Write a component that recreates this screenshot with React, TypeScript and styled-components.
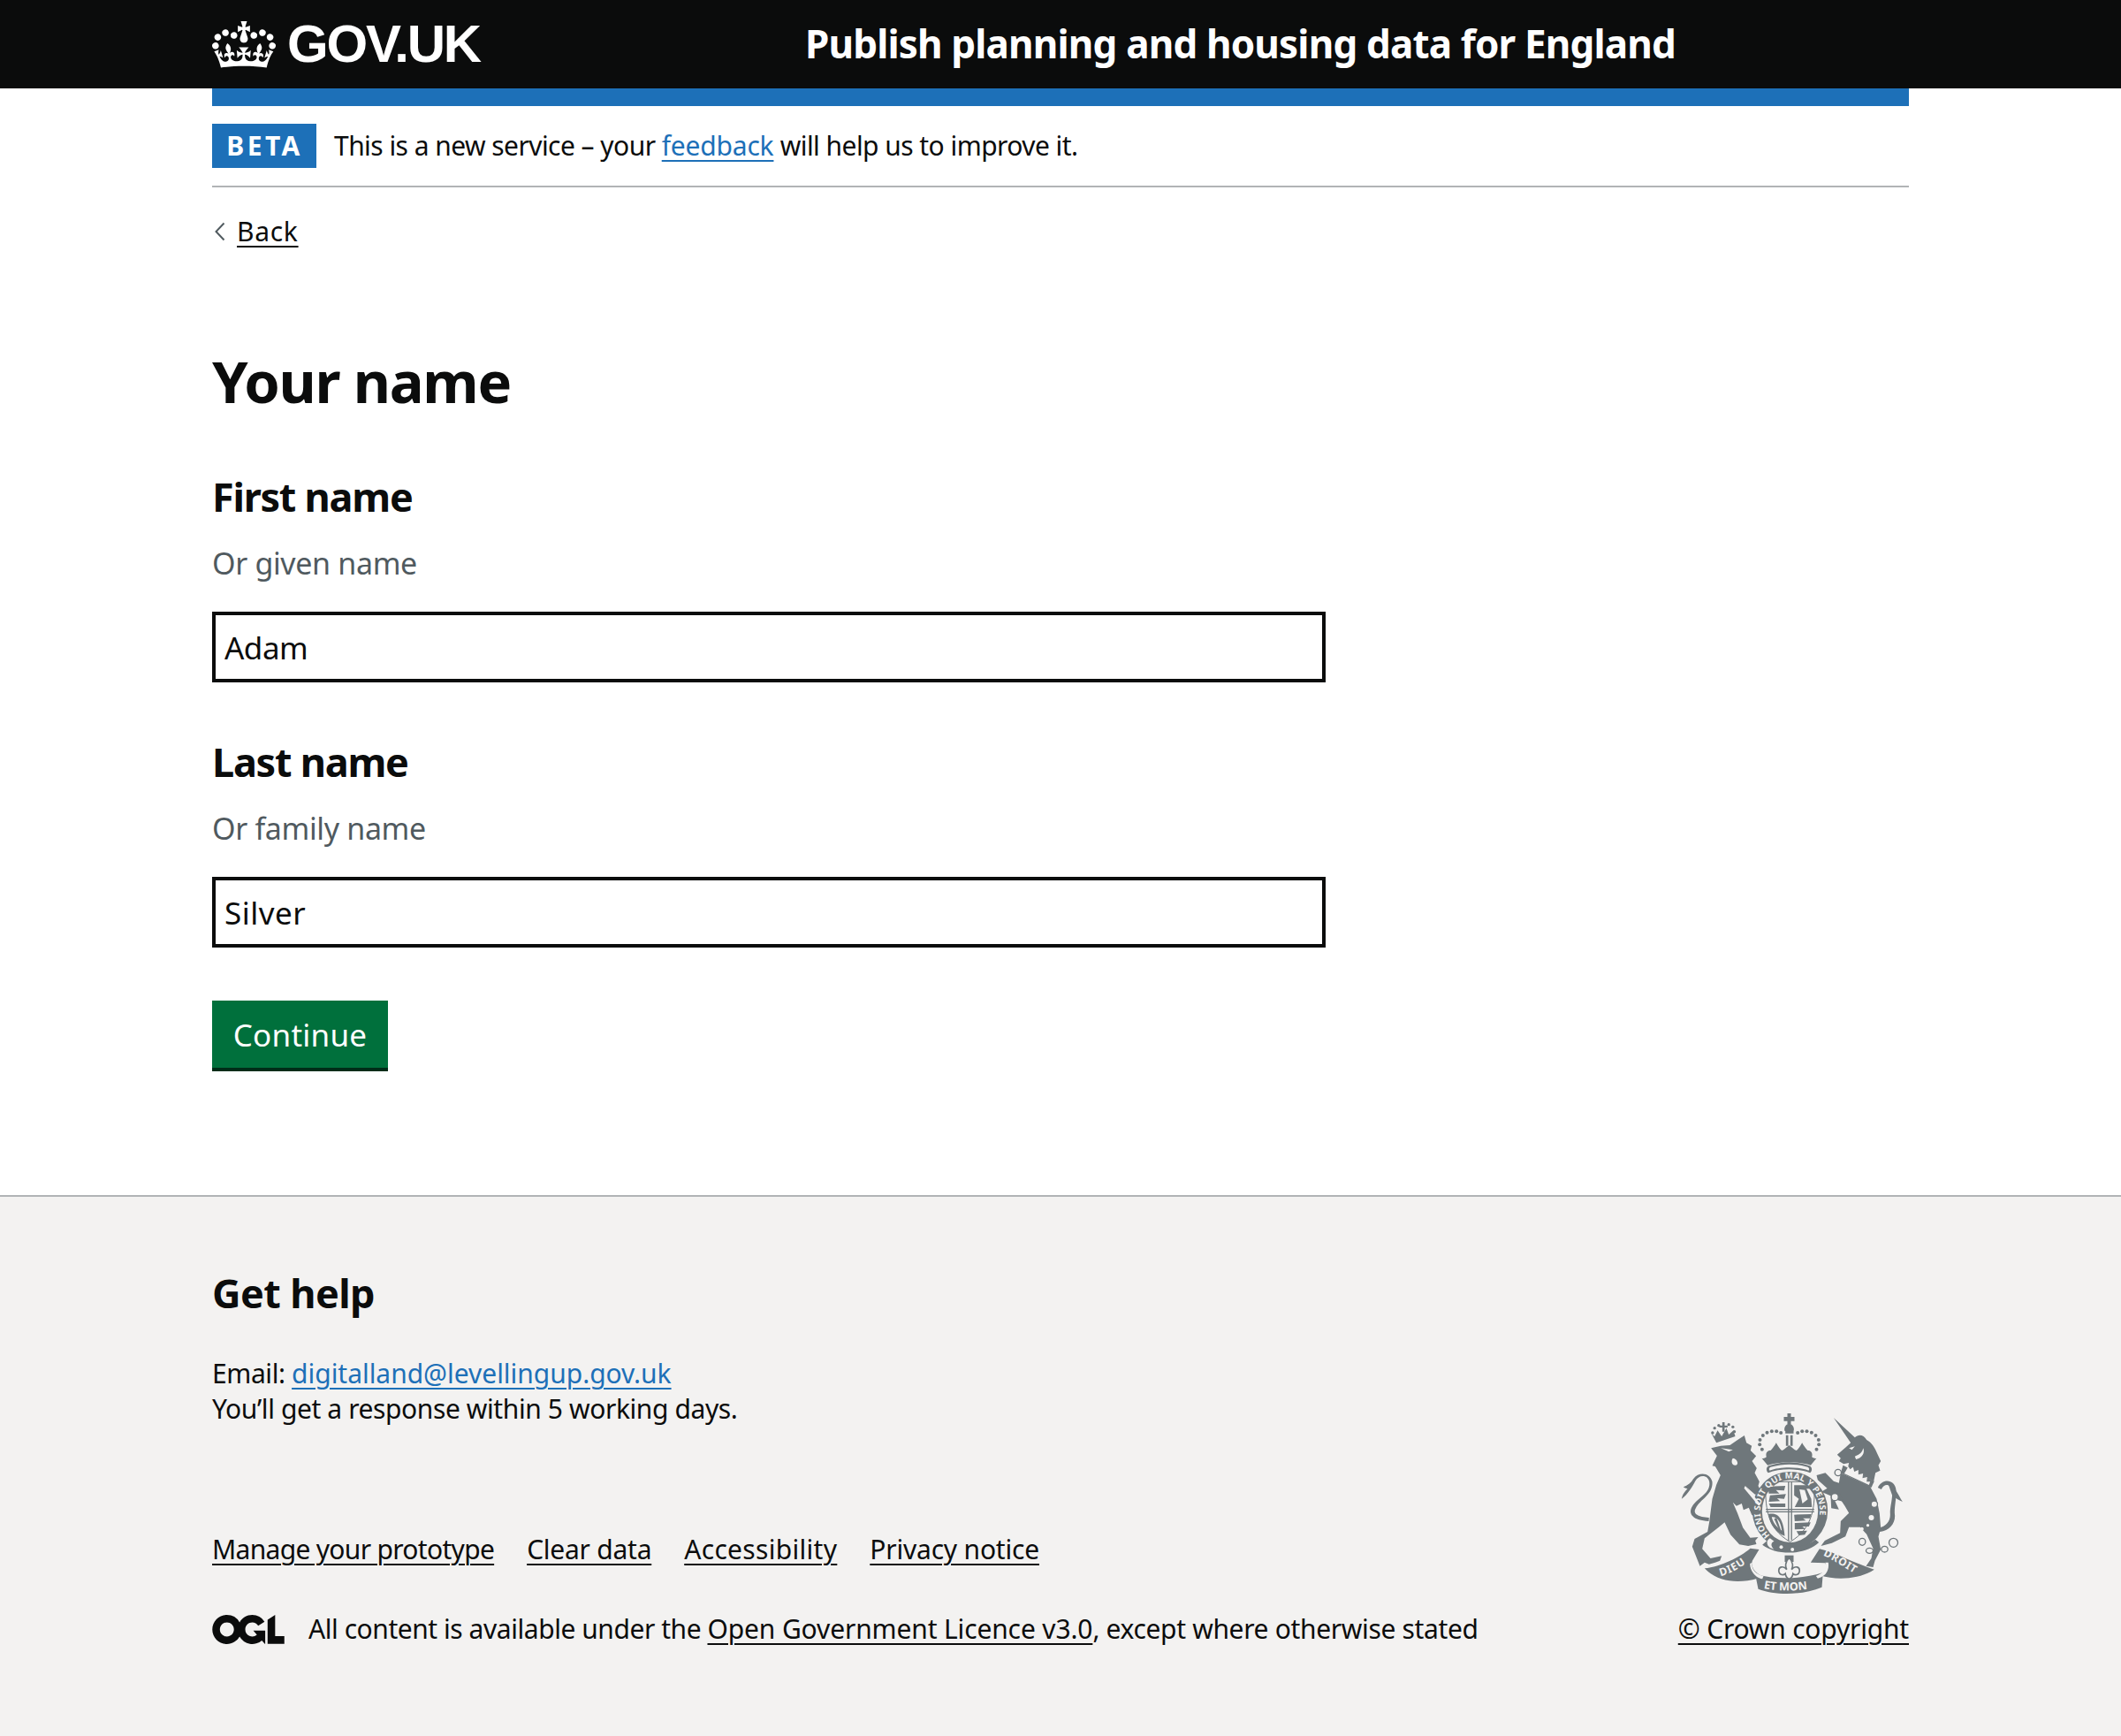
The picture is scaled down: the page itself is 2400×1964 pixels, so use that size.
import React from "react";
import styled, { createGlobalStyle } from "styled-components";

const FONT = `"Noto Sans", Arial, sans-serif`;
const INK = "#0b0c0c";
const CREST = "#6f777b";
const PAPER = "#f3f2f1";

const Global = createGlobalStyle`
  html, body { margin: 0; padding: 0; background: #fff; }
  body { font-family: ${FONT}; color: ${INK}; }
  * { box-sizing: border-box; }
`;

const Header = styled.header`
  background: ${INK};
  height: 100px;
`;
const Wrap = styled.div`
  width: 1920px;
  margin: 0 auto;
`;
const HeaderRow = styled(Wrap)`
  display: flex;
  align-items: center;
  height: 100px;
`;
const Logo = styled.a`
  display: flex;
  align-items: center;
  width: 671px;
  color: #fff;
  font-family: "Liberation Sans", Arial, sans-serif;
  font-weight: 700;
  font-size: 60px;
  letter-spacing: -2.2px;
  line-height: 60px;
  gap: 13px;
  svg { display: block; width: 72px; height: 53px; }
`;
const ServiceName = styled.span`
  padding-bottom: 2px;
  color: #fff;
  font-weight: 700;
  font-size: 44px;
  letter-spacing: -0.85px;
  line-height: 60px;
`;
const BlueBar = styled(Wrap)`
  height: 20px;
  background: #1d70b8;
`;
const Phase = styled(Wrap)`
  display: flex;
  align-items: center;
  gap: 20px;
  padding: 20px 0;
  border-bottom: 2px solid #b1b4b6;
`;
const Tag = styled.strong`
  display: block;
  width: 118px;
  height: 50px;
  padding-left: 1px;
  background: #1d70b8;
  color: #fff;
  font-size: 30px;
  font-weight: 700;
  letter-spacing: 3.4px;
  line-height: 50px;
  text-align: center;
`;
const PhaseText = styled.span`
  font-size: 30px;
  letter-spacing: -0.55px;
  line-height: 40px;
`;
const Link = styled.a<{ $track?: number }>`
  color: #1d70b8;
  text-decoration: underline;
  text-decoration-thickness: 2px;
  text-underline-offset: 5px;
  letter-spacing: ${(p) => (p.$track === undefined ? "inherit" : `${p.$track}px`)};
`;
const DarkLink = styled(Link)`
  color: ${INK};
`;
const BackRow = styled(Wrap)`
  display: flex;
  align-items: center;
  gap: 13px;
  margin-top: 30px;
  padding-left: 3px;
  font-size: 30px;
  line-height: 40px;
  svg { display: block; }
`;
const Main = styled(Wrap)`
  padding-top: 111px;
  padding-bottom: 140px;
`;
const Title = styled.h1`
  margin: 0 0 63px;
  font-size: 65px;
  font-weight: 700;
  letter-spacing: -1.3px;
  line-height: 76px;
`;
const Field = styled.div`
  margin-bottom: 60px;
`;
const Label = styled.label`
  display: block;
  font-size: 45px;
  font-weight: 700;
  letter-spacing: -1.25px;
  line-height: 60px;
`;
const Hint = styled.div`
  margin: 20px 0 30px;
  color: #505a5f;
  font-size: 34px;
  letter-spacing: -0.35px;
  line-height: 50px;
`;
const Input = styled.input<{ $track: number }>`
  display: block;
  width: 1260px;
  height: 80px;
  padding: 0 10px;
  border: 4px solid ${INK};
  border-radius: 0;
  outline: none;
  background: #fff;
  color: ${INK};
  font-family: ${FONT};
  font-size: 35px;
  letter-spacing: ${(p) => p.$track}px;
`;
const Button = styled.button`
  display: block;
  width: 199px;
  height: 80px;
  padding: 0;
  border: 0;
  border-bottom: 4px solid #002d18;
  border-radius: 0;
  background: #00703c;
  color: #fff;
  font-family: ${FONT};
  font-size: 35px;
  letter-spacing: 0.25px;
`;
const Footer = styled.footer`
  height: 612px;
  background: ${PAPER};
  border-top: 2px solid #b1b4b6;
  padding-top: 79px;
`;
const FooterRow = styled(Wrap)`
  display: flex;
  justify-content: space-between;
  align-items: flex-end;
`;
const FooterMain = styled.div`
  font-size: 30px;
  letter-spacing: -0.4px;
  line-height: 40px;
`;
const HelpTitle = styled.h2`
  margin: 0 0 41px;
  font-size: 45px;
  font-weight: 700;
  letter-spacing: -0.6px;
  line-height: 60px;
`;
const HelpLine = styled.div``;
const MetaLinks = styled.div`
  display: flex;
  gap: 37px;
  margin-top: 119px;
`;
const Licence = styled.div`
  display: flex;
  align-items: center;
  gap: 27px;
  margin-top: 50px;
  svg { display: block; width: 82px; height: 33px; color: ${INK}; }
`;
const LicenceText = styled.span`
  letter-spacing: -0.34px;
`;
const LicenceLead = styled.span`
  letter-spacing: -0.45px;
`;
const Copyright = styled.div`
  display: flex;
  flex-direction: column;
  align-items: flex-end;
  font-size: 30px;
  line-height: 40px;
  svg { display: block; width: 252px; height: 204px; margin: 0 6px 20px 0; }
`;

const Crown = () => (
  <svg viewBox="0 0 132 97" aria-hidden="true">
    <path fill="currentColor" fillRule="evenodd" d="M25 30.2c3.5 1.5 7.7-.2 9.1-3.7 1.5-3.6-.2-7.8-3.9-9.2-3.6-1.4-7.6.3-9.1 3.9-1.4 3.5.3 7.5 3.9 9zM9 39.5c3.6 1.5 7.8-.2 9.2-3.7 1.5-3.6-.2-7.8-3.9-9.1-3.6-1.5-7.6.2-9.1 3.8-1.4 3.5.3 7.5 3.8 9zM4.4 57.2c3.5 1.5 7.7-.2 9.1-3.8 1.5-3.6-.2-7.7-3.9-9.1-3.5-1.5-7.6.3-9.1 3.8-1.4 3.5.3 7.6 3.9 9.1zm38.3-21.4c3.5 1.5 7.7-.2 9.1-3.8 1.5-3.6-.2-7.7-3.9-9.1-3.6-1.5-7.6.3-9.1 3.8-1.3 3.6.4 7.7 3.9 9.1zm64.4-5.6c-3.6 1.5-7.8-.2-9.1-3.7-1.5-3.6.2-7.8 3.8-9.2 3.6-1.4 7.7.3 9.2 3.9 1.3 3.5-.4 7.5-3.9 9zm15.9 9.3c-3.6 1.5-7.7-.2-9.1-3.7-1.5-3.6.2-7.8 3.7-9.1 3.6-1.5 7.7.2 9.2 3.8 1.5 3.5-.3 7.5-3.8 9zm4.7 17.7c-3.6 1.5-7.8-.2-9.2-3.8-1.5-3.6.2-7.7 3.9-9.1 3.6-1.5 7.7.3 9.2 3.8 1.3 3.5-.4 7.6-3.9 9.1zM89.3 35.8c-3.6 1.5-7.8-.2-9.2-3.8-1.4-3.6.2-7.7 3.9-9.1 3.6-1.5 7.7.3 9.2 3.8 1.4 3.6-.3 7.7-3.9 9.1zM69.7 17.7l8.9 4.7V9.3l-8.9 2.8c-.2-.3-.5-.6-.9-.9L72.4 0H59.6l3.5 11.2c-.3.3-.6.5-.9.9l-8.8-2.8v13.1l8.8-4.7c.3.3.6.7.9.9l-5 15.4v.1c-.2.8-.4 1.6-.4 2.4 0 4.1 3.1 7.5 7 8.1h.2c.3 0 .7.1 1 .1.4 0 .7 0 1-.1h.2c4-.6 7.1-4.1 7.1-8.1 0-.8-.1-1.7-.4-2.4V34l-5.1-15.4c.4-.2.7-.6 1-.9zM66 92.8c16.9 0 32.8 1.1 47.1 3.2 4-16.9 8.9-26.7 14-33.5l-9.6-3.4c1 4.9 1.1 7.2 0 10.2-1.5-1.4-3-4.3-4.2-8.7L108.6 76c2.8-2 5-3.2 7.5-3.3-4.4 9.4-10 11.9-13.6 11.2-4.3-.8-6.3-4.6-5.6-7.9 1-4.7 5.7-5.9 8-.5 4.3-8.7-3-11.4-7.6-8.8 7.1-7.2 7.9-13.5 2.1-21.1-8 6.1-8.1 12.3-4.5 20.8-4.7-5.4-12.1-2.5-9.5 6.2 3.4-5.2 7.9-2 7.2 3.1-.6 4.3-6.4 7.8-13.5 7.2-10.3-.9-10.9-8-11.2-13.8 2.5-.5 7.1 1.8 11 7.3L80.2 60c-4.1 4.4-8 5.3-12.3 5.4 1.4-4.4 8-11.6 8-11.6H55.5s6.4 7.2 7.9 11.6c-4.2-.1-8-1-12.3-5.4l1.4 16.4c3.9-5.5 8.5-7.7 10.9-7.3-.3 5.8-.9 12.8-11.1 13.8-7.2.6-12.9-2.9-13.5-7.2-.7-5 3.8-8.3 7.1-3.1 2.7-8.7-4.6-11.6-9.4-6.2 3.7-8.5 3.6-14.7-4.6-20.8-5.8 7.6-5 13.9 2.2 21.1-4.7-2.6-11.9.1-7.7 8.8 2.3-5.5 7.1-4.2 8.1.5.7 3.3-1.3 7.1-5.7 7.9-3.5.7-9-1.8-13.5-11.2 2.5.1 4.7 1.3 7.5 3.3l-4.7-15.4c-1.2 4.4-2.7 7.2-4.3 8.7-1.1-3-.9-5.3 0-10.2l-9.5 3.4c5 6.9 9.9 16.7 14 33.5 14.8-2.1 30.8-3.2 47.7-3.2z" />
  </svg>
);

const Chevron = () => (
  <svg width="12" height="22" viewBox="0 0 12 22" aria-hidden="true">
    <path d="M10.5 1.5 1.5 11l9 9.5" fill="none" stroke="#505a5f" strokeWidth="2" />
  </svg>
);

const OglLogo = () => (
  <svg viewBox="0 0 483.2 195.7" aria-hidden="true">
    <path fill="currentColor" d="M421.5 142.8V.1l-50.7 32.3v161.1h112.4v-50.7zm-122.3-9.6A47.12 47.12 0 0 1 221 97.8c0-26 21.1-47.1 47.1-47.1 16.7 0 31.4 8.7 39.7 21.8l42.7-27.2A97.63 97.63 0 0 0 268.1 0c-36.5 0-68.3 20.1-85.1 49.7A98 98 0 0 0 97.8 0C43.9 0 0 43.9 0 97.8s43.9 97.8 97.8 97.8c36.5 0 68.3-20.1 85.1-49.7a97.76 97.76 0 0 0 149.6 25.4l19.4 22.2h3v-87.8h-80l24.3 27.5zM97.8 145c-26 0-47.1-21.1-47.1-47.1s21.1-47.1 47.1-47.1 47.2 21 47.2 47S123.8 145 97.8 145" />
  </svg>
);

const crownDots: [number, number][] = [
  [345, 182], [337, 166], [338, 150], [348, 135], [362, 125], [378, 121], [394, 121], [409, 126],
  [466, 126], [481, 121], [497, 121], [513, 125], [527, 135], [537, 150], [538, 166], [530, 182],
];
const lionCrownDots: [number, number][] = [[177, 126], [184, 110], [198, 101], [232, 98], [246, 106], [251, 122]];
const chain: [number, number, number, number][] = [
  [685, 496, 11, 12], [710, 526, 12, 9], [761, 521, 11, 10], [791, 499, 15, 15],
];
const unicornRings: [number, number, number][] = [[603, 261, 11], [592, 344, 12], [726, 368, 11]];
const unicornSpots: [number, number, number][] = [[716, 414, 9], [684, 452, 6], [704, 440, 5]];

const Crest = () => (
  <svg viewBox="70 60 755 612" aria-hidden="true">
    <defs>
      <path id="garterPath" d="M372 474 A101 111 0 1 1 508 474" />
      <path id="dieuPath" d="M204 612 C240 604 280 580 312 552" />
      <path id="monPath" d="M350 654 C390 664 480 664 526 650" />
      <path id="droitPath" d="M552 542 C590 558 635 590 672 612" />
    </defs>
    <g fill={CREST} stroke="none">
      <path d="M172 178 L205 170 L236 168 L262 150 L285 135 L292 160 L310 170 L306 186 L325 205 L311 222 L327 246 L320 262 L336 292 L332 306 L340 322 L322 336 L290 308 L318 345 L345 400 L330 418 L310 404 L300 380 L282 388 L276 366 L258 374 L246 362 L262 400 L280 448 L305 482 L332 480 L322 492 L326 504 L298 510 L268 505 L238 472 L218 430 L198 446 L150 484 L142 520 L170 552 L208 544 L202 560 L186 566 L165 572 L150 566 L134 578 L108 512 L116 486 L160 462 L166 428 L176 350 L190 302 L204 270 L186 240 L176 238 L192 204 Z" />
      <path d="M205 178 L246 184 L232 190 Z M246 212 C262 214 268 236 254 236 C240 236 240 218 246 212 Z" fill={PAPER} />
      <path d="M164 426 C112 424 92 402 108 376 C128 344 172 332 166 292 C160 266 130 268 118 290 C110 306 92 336 72 350 C76 334 82 326 92 316 C84 314 80 312 78 310 C92 304 104 296 112 282 C130 258 168 260 176 292 C180 336 134 352 120 382 C108 402 130 412 165 414 Z" />
      <path d="M190 160 L254 138 L248 118 L232 132 L224 110 L208 138 L194 118 L184 138 L174 130 Z" />
      <path d="M200 101 h10 v-11 h8 v11 h10 v7 h-10 v14 h-8 v-14 h-10 z" />
      {lionCrownDots.map(([cx, cy]) => (
        <circle key={`${cx}-${cy}`} cx={cx} cy={cy} r="5" />
      ))}
      {crownDots.map(([cx, cy]) => (
        <circle key={`${cx}-${cy}`} cx={cx} cy={cy} r="6" />
      ))}
      <path d="M431 60 h12 v12 h12 v14 h-12 v10 h-12 v-10 h-12 v-14 h12 z" />
      <path d="M437 94 C450 98 456 112 452 120 L422 120 C418 112 424 98 437 94 Z" />
      <path d="M424 120 H452 V128 H424 Z M426 134 h8 v36 h-8 z M441 134 h8 v36 h-8 z" />
      <path d="M360 208 C356 196 362 186 374 186 C380 180 388 170 393 160 C398 170 406 182 412 186 C420 184 426 176 437 168 C448 176 454 184 462 186 C468 182 476 170 481 160 C486 170 494 180 500 186 C512 186 518 196 514 208 C520 212 526 214 530 212 L510 236 C470 222 404 222 364 236 L344 212 C350 214 354 212 360 208 Z" />
      <path d="M368 238 C420 222 456 222 506 238 C516 242 516 256 508 262 C470 246 404 246 366 262 C358 256 358 242 368 238 Z" />
      <path d="M374 242 C420 230 456 230 500 242 C506 246 506 250 503 254 C470 240 404 240 371 254 C368 250 368 246 374 242 Z" fill={PAPER} />
      <ellipse cx="440" cy="390" rx="128" ry="132" />
      <ellipse cx="440" cy="392" rx="95" ry="106" fill={PAPER} />
      <path d="M358 292 H522 C526 372 520 450 440 496 C360 450 354 372 358 292 Z" fill="none" stroke={CREST} strokeWidth="3" />
      <path d="M433 292 h4 v200 h-4 z M443 292 h4 v198 h-4 z M358 384 H522 v4 H358 z M358 392 H522 v4 H358 z" />
      <path d="M366 308 L424 306 L420 322 L392 320 L404 332 L368 332 Z M372 338 L426 334 L420 350 L396 348 L406 358 L368 360 Z M368 366 H424 V378 H374 Z" />
      <path d="M454 304 L514 304 L514 316 L496 316 L512 350 L514 378 L456 378 L470 350 L454 338 Z" />
      <path d="M472 318 L490 320 L500 352 L482 366 Z" fill={PAPER} />
      <path d="M454 404 L512 402 L508 416 L484 416 L494 424 L456 426 Z M456 432 L510 430 L504 444 L482 444 L492 452 L456 454 Z M462 460 L498 458 L490 472 L470 474 Z" />
      <path d="M366 402 C398 396 416 412 422 476 C394 466 372 440 366 402 Z" />
      <path d="M378 412 C396 410 408 426 412 458 C396 448 382 432 378 412 Z" fill={PAPER} />
      <path d="M386 418 L394 414 L410 460 L403 456 Z" />
      <path d="M288 306 L340 368 L334 374 L284 314 Z" fill={PAPER} />
      <path d="M362 492 C392 518 482 524 526 488 L538 498 C490 544 392 542 346 506 Z" />
      <path d="M372 484 C360 490 358 506 372 516 L386 522 C372 508 376 498 386 494 Z" fill={PAPER} />
      <circle cx="410" cy="514" r="6" fill={PAPER} />
      <circle cx="448" cy="522" r="6" fill={PAPER} />
      <path d="M588 75 L660 142 C672 130 690 132 700 150 C716 158 728 176 734 192 L748 222 L740 236 L746 254 L730 262 L724 290 L636 246 L640 228 L622 232 L606 222 L612 212 L600 200 L628 176 L646 160 Z" />
      <path d="M640 178 L660 172 L650 184 Z M660 206 C676 200 686 192 688 178 C696 192 684 214 664 216 Z" fill={PAPER} />
      <path d="M612 262 L712 308 L734 350 L744 400 L748 450 L740 478 L748 522 L728 560 L722 582 L698 578 L716 552 L722 518 L700 470 L678 446 L640 446 L628 478 L582 500 L545 510 L558 492 L610 466 L612 426 L640 398 L626 374 L610 350 L600 330 L566 314 L534 286 L530 270 L560 262 L588 290 L606 296 Z" />
      <path d="M608 328 L570 312 L546 326 L578 340 L580 382 L606 386 L590 352 L622 360 Z" />
      <path d="M620 236 L726 290 L716 312 L612 262 Z" />
      <path d="M630 254 L638 240 L644 250 L654 242 L658 258 L672 252 L672 268 L688 264 L686 280 L702 276 L700 292 L712 292 L708 303 L624 264 Z" fill={PAPER} />
      <path d="M738 312 C752 280 796 282 800 320 C802 352 792 380 796 408 C796 436 776 458 745 462 L742 448 C764 444 780 428 780 404 C778 376 790 350 786 322 C782 300 760 296 750 318 Z" />
      <path d="M770 290 C790 300 808 336 822 360 C806 354 796 346 786 336 Z" />
      {unicornRings.map(([cx, cy, r]) => (
        <circle key={`${cx}-${cy}`} cx={cx} cy={cy} r={r} fill={PAPER} stroke={CREST} strokeWidth="4" />
      ))}
      {unicornSpots.map(([cx, cy, r]) => (
        <circle key={`${cx}-${cy}`} cx={cx} cy={cy} r={r} fill={PAPER} />
      ))}
      {chain.map(([cx, cy, rx, ry]) => (
        <ellipse key={`${cx}-${cy}`} cx={cx} cy={cy} rx={rx} ry={ry} fill="none" stroke={CREST} strokeWidth="4" />
      ))}
      <path d="M150 586 C205 580 270 548 305 518 L335 522 L312 560 C306 580 318 598 340 610 L330 620 C260 640 190 630 150 586 Z" />
      <path d="M322 606 C390 624 480 624 552 600 L548 650 C480 678 390 678 332 656 Z" />
      <path d="M510 566 L540 520 C590 530 660 570 726 590 C680 622 600 628 542 610 C560 598 566 585 560 568 Z" />
      <path d="M312 566 C306 586 322 606 350 612 L346 622 C322 618 304 594 304 570 Z" fill={PAPER} />
      <path d="M560 566 C566 586 552 604 528 612 L534 620 C560 614 574 594 570 566 Z" fill={PAPER} />
      <path d="M422 542 h30 v22 h-30 z" />
      <path d="M437 550 C452 564 450 582 445 590 C456 576 474 580 472 596 C470 610 456 610 450 604 C448 618 442 620 437 622 C432 620 426 618 424 604 C418 610 404 610 402 596 C400 580 418 576 429 590 C424 582 422 564 437 550 Z" fill={PAPER} stroke={CREST} strokeWidth="5" />
    </g>
    <g fill={PAPER} fontFamily={FONT} fontWeight="700" stroke="none">
      <text fontSize="29" letterSpacing="1">
        <textPath href="#garterPath" startOffset="0">HONI SOIT QUI MAL Y PENSE</textPath>
      </text>
      <text fontSize="36" letterSpacing="3">
        <textPath href="#dieuPath">DIEU</textPath>
      </text>
      <text fontSize="38">
        <textPath href="#monPath">ET MON</textPath>
      </text>
      <text fontSize="36" letterSpacing="2">
        <textPath href="#droitPath">DROIT</textPath>
      </text>
    </g>
  </svg>
);

export default function App() {
  return (
    <>
      <Global />
      <Header>
        <HeaderRow>
          <Logo>
            <Crown />
            GOV.UK
          </Logo>
          <ServiceName>Publish planning and housing data for England</ServiceName>
        </HeaderRow>
      </Header>
      <BlueBar />
      <Phase>
        <Tag>BETA</Tag>
        <PhaseText>
          This is a new service – your <Link href="#" $track={-0.2}>feedback</Link> will help us to improve it.
        </PhaseText>
      </Phase>
      <BackRow>
        <Chevron />
        <DarkLink href="#" $track={0.7}>Back</DarkLink>
      </BackRow>
      <Main>
        <Title>Your name</Title>
        <Field>
          <Label>First name</Label>
          <Hint>Or given name</Hint>
          <Input defaultValue="Adam" $track={-0.5} />
        </Field>
        <Field>
          <Label>Last name</Label>
          <Hint>Or family name</Hint>
          <Input defaultValue="Silver" $track={0.5} />
        </Field>
        <Button>Continue</Button>
      </Main>
      <Footer>
        <FooterRow>
          <FooterMain>
            <HelpTitle>Get help</HelpTitle>
            <HelpLine>
              Email: <Link href="#" $track={-0.03}>digitalland@levellingup.gov.uk</Link>
            </HelpLine>
            <HelpLine>You’ll get a response within 5 working days.</HelpLine>
            <MetaLinks>
              <DarkLink href="#" $track={-0.69}>Manage your prototype</DarkLink>
              <DarkLink href="#" $track={-0.25}>Clear data</DarkLink>
              <DarkLink href="#" $track={0.3}>Accessibility</DarkLink>
              <DarkLink href="#" $track={-0.2}>Privacy notice</DarkLink>
            </MetaLinks>
            <Licence>
              <OglLogo />
              <LicenceText>
                <LicenceLead>All content is available under the </LicenceLead>
                <DarkLink href="#" $track={-0.14}>Open Government Licence v3.0</DarkLink>, except where otherwise stated
              </LicenceText>
            </Licence>
          </FooterMain>
          <Copyright>
            <Crest />
            <DarkLink href="#" $track={-0.2}>© Crown copyright</DarkLink>
          </Copyright>
        </FooterRow>
      </Footer>
    </>
  );
}
